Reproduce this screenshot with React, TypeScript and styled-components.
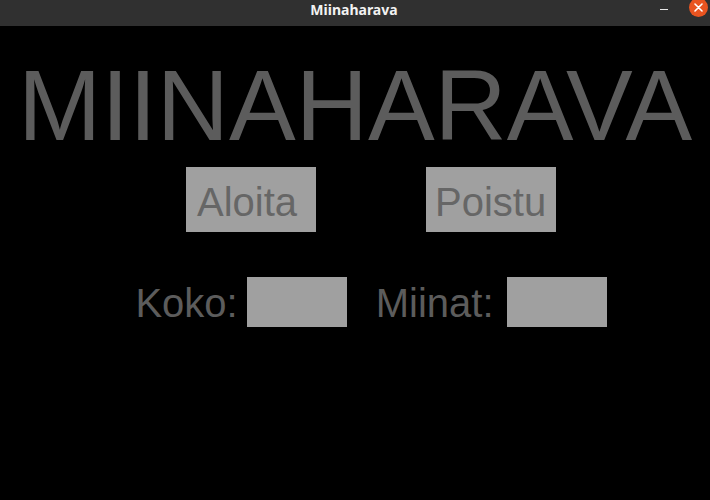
import React from "react";
import styled, { createGlobalStyle } from "styled-components";

const Global = createGlobalStyle`
  html, body { margin: 0; padding: 0; background: #000; }
  body { width: 710px; height: 500px; overflow: hidden; }
`;

const Window = styled.div`
  width: 710px;
  height: 500px;
  display: flex;
  flex-direction: column;
  background: #000;
  font-family: "Liberation Sans", Arial, sans-serif;
`;

const TitleBar = styled.div`
  position: relative;
  height: 26px;
  flex: 0 0 26px;
  background: #303030;
  display: flex;
  align-items: center;
  justify-content: center;
`;

const TitleText = styled.span`
  font-family: "Noto Sans", "DejaVu Sans", sans-serif;
  font-weight: 700;
  font-size: 14px;
  color: #f2f2f2;
  line-height: 1;
  margin-top: -6px;
  margin-left: -2px;
`;

const WinControls = styled.div`
  position: absolute;
  right: 2px;
  top: -2px;
  display: flex;
  align-items: center;
  gap: 21px;
`;

const MinButton = styled.div`
  width: 8px;
  height: 1.5px;
  background: #e8e8e8;
  margin-top: 4px;
`;

const CloseButton = styled.div`
  width: 19px;
  height: 19px;
  border-radius: 50%;
  background: #e95420;
  display: flex;
  align-items: center;
  justify-content: center;
`;

const Main = styled.div`
  flex: 1;
  display: flex;
  flex-direction: column;
  align-items: stretch;
`;

const BigTitle = styled.h1`
  margin: 29px 0 0 0;
  font-weight: 400;
  font-size: 100px;
  line-height: 1;
  color: #5c5c5c;
  text-align: center;
  letter-spacing: 0;
`;

const Row = styled.div<{ $top: number }>`
  display: flex;
  justify-content: center;
  align-items: center;
  padding-left: 32px;
  margin-top: ${(p) => p.$top}px;
`;

const Button = styled.button<{ $pad: number }>`
  width: 130px;
  height: 65px;
  border: none;
  background: #a0a0a0;
  color: #666666;
  font-family: "Liberation Sans", Arial, sans-serif;
  font-size: 40px;
  text-align: left;
  padding: 4px 0 0 ${(p) => p.$pad}px;
  margin: 0;
  line-height: 1;
`;

const Spacer = styled.div<{ $w: number }>`
  width: ${(p) => p.$w}px;
  flex: 0 0 auto;
`;

const Label = styled.span`
  font-size: 40px;
  color: #5c5c5c;
  line-height: 1;
  margin-top: 2px;
`;

const Field = styled.div`
  width: 100px;
  height: 50px;
  background: #a0a0a0;
`;

export default function App() {
  return (
    <>
      <Global />
      <Window>
        <TitleBar>
          <TitleText>Miinaharava</TitleText>
          <WinControls>
            <MinButton />
            <CloseButton>
              <svg width="9" height="9" viewBox="0 0 9 9">
                <path d="M1 1 L8 8 M8 1 L1 8" stroke="#fff" strokeWidth="1.6" strokeLinecap="round" />
              </svg>
            </CloseButton>
          </WinControls>
        </TitleBar>
        <Main>
          <BigTitle>MIINAHARAVA</BigTitle>
          <Row $top={12}>
            <Button $pad={11}>Aloita</Button>
            <Spacer $w={110} />
            <Button $pad={9}>Poistu</Button>
          </Row>
          <Row $top={45}>
            <Label>Koko:</Label>
            <Spacer $w={9} />
            <Field />
            <Spacer $w={29} />
            <Label>Miinat:</Label>
            <Spacer $w={13} />
            <Field />
          </Row>
        </Main>
      </Window>
    </>
  );
}
